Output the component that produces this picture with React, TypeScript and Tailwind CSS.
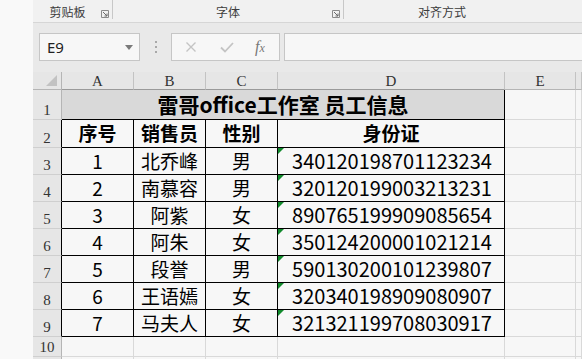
import React from "react"

const rows = [
  ["1", "北乔峰", "男", "34012019870112323­4"],
  ["2", "南慕容", "男", "32012019900321323­1"],
  ["3", "阿紫", "女", "89076519990908565­4"],
  ["4", "阿朱", "女", "35012420000102121­4"],
  ["5", "段誉", "男", "59013020010123980­7"],
  ["6", "王语嫣", "女", "32034019890908090­7"],
  ["7", "马夫人", "女", "32132119970803091­7"],
].map((r) => r.map((s) => s.replace(/\u00ad/g, "")))

const cjk = { fontFamily: '"Noto Sans CJK SC", "Noto Sans", sans-serif' }
const serif = { fontFamily: '"Liberation Serif", "Noto Sans CJK SC", serif' }

const Launcher = () => (
  <svg width="8" height="8" viewBox="0 0 8 8" className="absolute right-[3px] top-[10px]">
    <path d="M0.5 0.5h7v7h-7z" fill="none" stroke="#8a8a8a" strokeWidth="1" />
    <path d="M2 2l4 4M6 3.5v2.5h-2.5" fill="none" stroke="#6a6a6a" strokeWidth="1" />
  </svg>
)

const RowHead = ({ n, h, dark }: { n: string; h: string; dark?: boolean }) => (
  <div
    className={`${h} flex items-end justify-center pb-[1px] bg-[#e6e6e6] border-b border-[#cfcfcf] border-r ${dark ? "border-r-black" : "border-r-[#b5b5b5]"} text-[15px] text-[#333] leading-none`}
    style={serif}
  >
    {n}
  </div>
)

const Gap = ({ h }: { h: string }) => <div className={`${h} bg-[#f7f7f7] border-r border-b border-[#d9d9d9]`} />

export default function App() {
  return (
    <div className="w-[582px] h-[359px] overflow-hidden flex bg-[#f7f7f7]">
      <div className="w-[33px] shrink-0 bg-[#f9f9f9]" />
      <div className="flex-1 flex flex-col bg-[#e9e9e9]">
        {/* ribbon group labels */}
        <div className="h-[23px] shrink-0 flex bg-[#f1f1f1] border-b border-[#d6d6d6] text-[12px] text-[#3c3c3c]" style={cjk}>
          <div className="relative w-[80px] h-[19px] flex items-center justify-center pt-[5px] pr-[10px] border-r border-[#c8c8c8]">
            剪贴板
            <Launcher />
          </div>
          <div className="relative w-[231px] h-[19px] flex items-center justify-center pt-[5px] border-r border-[#c8c8c8]">
            字体
            <Launcher />
          </div>
          <div className="w-[196px] h-[19px] flex items-center justify-center pt-[5px]">对齐方式</div>
        </div>

        {/* formula bar */}
        <div className="h-[49px] shrink-0 flex items-start pt-[10px] pl-[6px]">
          <div className="w-[101px] h-[28px] bg-[#f7f7f7] border border-[#c6c6c6] flex items-center justify-between pl-[7px] pr-[6px]">
            <span className="text-[15px] text-[#222]" style={{ fontFamily: '"Noto Sans", sans-serif' }}>E9</span>
            <svg width="8" height="5" viewBox="0 0 8 5"><path d="M0 0h8L4 5z" fill="#7a7a7a" /></svg>
          </div>
          <div className="w-[31px] h-[28px] flex flex-col items-center justify-center gap-[3px]">
            <span className="w-[2px] h-[2px] bg-[#a8a8a8]" />
            <span className="w-[2px] h-[2px] bg-[#a8a8a8]" />
            <span className="w-[2px] h-[2px] bg-[#a8a8a8]" />
          </div>
          <div className="w-[109px] h-[28px] bg-[#f7f7f7] border border-[#c6c6c6] flex items-center pl-[13px]">
            <svg width="12" height="12" viewBox="0 0 12 12"><path d="M1.5 1.5l9 9M10.5 1.5l-9 9" stroke="#c4c4c4" strokeWidth="1.4" /></svg>
            <svg width="14" height="12" viewBox="0 0 14 12" className="ml-[23px]"><path d="M1 6.5l4 4L13 2" fill="none" stroke="#c4c4c4" strokeWidth="1.8" /></svg>
            <span className="ml-[21px] text-[16px] italic text-[#777]" style={{ fontFamily: '"Liberation Serif", serif' }}>
              f<span className="text-[12px]">x</span>
            </span>
          </div>
          <div className="ml-[4px] flex-1 h-[28px] bg-[#f7f7f7] border border-[#c6c6c6] border-r-0" />
        </div>

        {/* sheet grid */}
        <div className="flex-1 grid grid-cols-[29px_72px_72px_72px_227px_71px_1fr] content-start bg-[#f7f7f7]">
          {/* column headers */}
          <div className="h-[18px] relative bg-[#e6e6e6] border-b border-r border-[#b5b5b5]">
            <svg width="11" height="11" viewBox="0 0 11 11" className="absolute right-[4px] bottom-[3px]"><path d="M11 0v11H0z" fill="#c2c2c2" /></svg>
          </div>
          {["A", "B", "C", "D", "E", ""].map((c, i) => (
            <div
              key={i}
              className={`h-[18px] flex items-end justify-center bg-[#e6e6e6] border-b border-r text-[15px] leading-none text-[#333] ${i < 4 ? "border-b-[#9a9a9a]" : "border-b-[#b5b5b5]"} border-r-[#c3c3c3]`}
              style={serif}
            >
              {c}
            </div>
          ))}

          {/* row 1: merged title */}
          <RowHead n="1" h="h-[30px]" />
          <div
            className="col-span-4 h-[30px] flex items-center justify-center bg-[#d9d9d9] border-b border-r border-black text-[21px] font-bold text-black"
            style={cjk}
          >
            雷哥office工作室 员工信息
          </div>
          <Gap h="h-[30px]" />
          <Gap h="h-[30px]" />

          {/* row 2: headers */}
          <RowHead n="2" h="h-[28px]" dark />
          {["序号", "销售员", "性别", "身份证"].map((t) => (
            <div key={t} className="h-[28px] flex items-center justify-center border-b border-r border-black text-[19px] font-bold text-black" style={cjk}>
              {t}
            </div>
          ))}
          <Gap h="h-[28px]" />
          <Gap h="h-[28px]" />

          {rows.map((r, i) => (
            <React.Fragment key={i}>
              <RowHead n={String(i + 3)} h="h-[27px]" dark />
              <div className="h-[27px] flex items-center justify-center border-b border-r border-black text-[19px] text-black" style={cjk}>
                {r[0]}
              </div>
              <div className="h-[27px] flex items-center justify-center border-b border-r border-black text-[19px] text-black" style={cjk}>
                {r[1]}
              </div>
              <div className="h-[27px] flex items-center justify-center border-b border-r border-black text-[19px] text-black" style={cjk}>
                {r[2]}
              </div>
              <div className="relative h-[27px] flex items-center justify-center pl-[2px] border-b border-r border-black text-[20px] text-black" style={cjk}>
                <span className="absolute left-0 top-0 w-0 h-0 border-t-[6px] border-r-[6px] border-t-[#118a2c] border-r-transparent" />
                {r[3]}
              </div>
              <Gap h="h-[27px]" />
              <Gap h="h-[27px]" />
            </React.Fragment>
          ))}

          {/* row 10 */}
          <RowHead n="10" h="h-[20px]" />
          {[0, 1, 2, 3, 4, 5].map((k) => (
            <Gap key={k} h="h-[20px]" />
          ))}
          <RowHead n="" h="h-[20px]" />
          {[0, 1, 2, 3, 4, 5].map((k) => (
            <Gap key={k} h="h-[20px]" />
          ))}
        </div>
      </div>
    </div>
  )
}
